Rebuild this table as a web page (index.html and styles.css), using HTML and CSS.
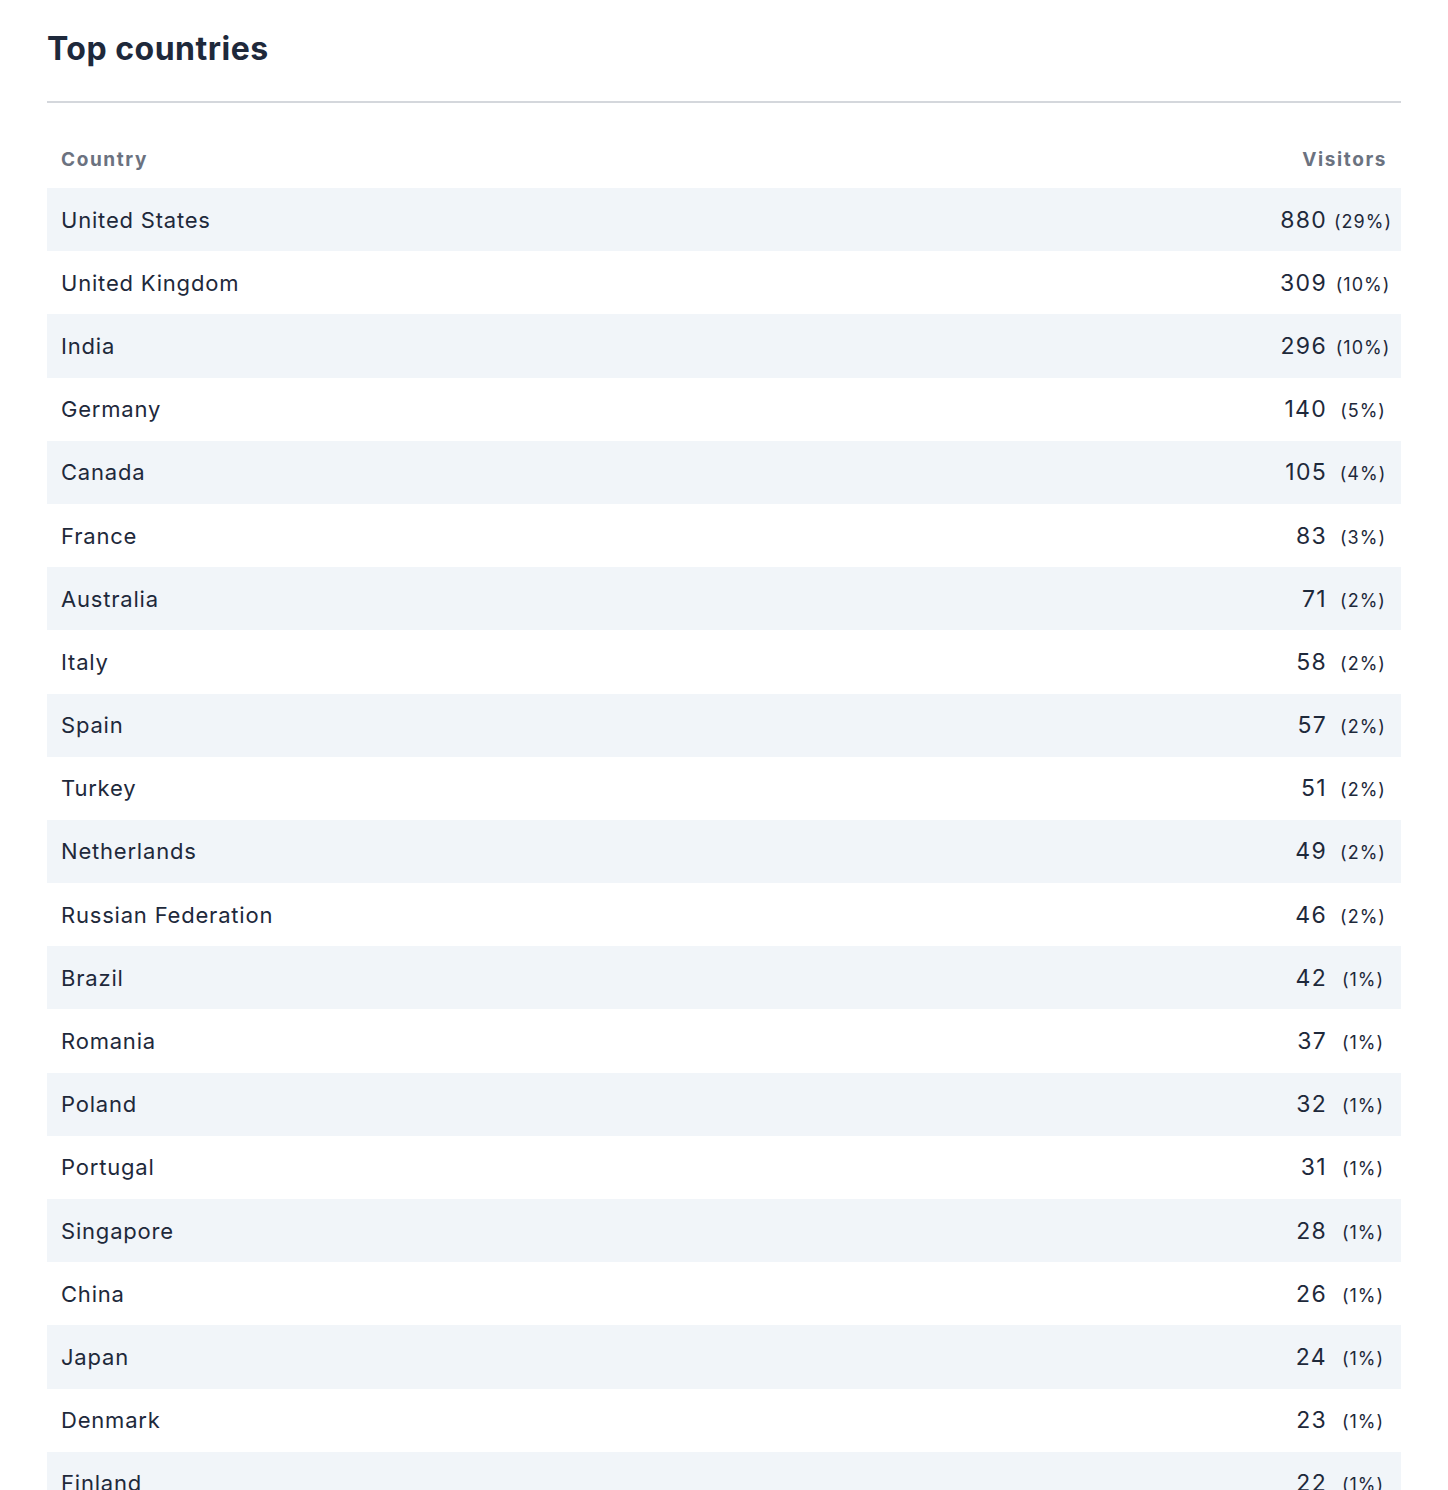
FILE: index.html
```html
<!DOCTYPE html>
<html lang="en">
<head>
  <meta charset="UTF-8">
  <meta name="viewport" content="width=device-width, initial-scale=1.0">
  <title>Top countries</title>
  <link rel="stylesheet" href="styles.css">
</head>
<body>
  <div class="panel">
    <h1 class="panel-title">Top countries</h1>

    <table class="countries">
      <thead>
        <tr>
          <th class="col-country">Country</th>
          <th class="col-visitors">Visitors</th>
        </tr>
      </thead>
      <tbody>
        <tr><td>United States</td><td class="num">880<span class="pct">(29%)</span></td></tr>
        <tr><td>United Kingdom</td><td class="num">309<span class="pct">(10%)</span></td></tr>
        <tr><td>India</td><td class="num">296<span class="pct">(10%)</span></td></tr>
        <tr><td>Germany</td><td class="num">140<span class="pct">(5%)</span></td></tr>
        <tr><td>Canada</td><td class="num">105<span class="pct">(4%)</span></td></tr>
        <tr><td>France</td><td class="num">83<span class="pct">(3%)</span></td></tr>
        <tr><td>Australia</td><td class="num">71<span class="pct">(2%)</span></td></tr>
        <tr><td>Italy</td><td class="num">58<span class="pct">(2%)</span></td></tr>
        <tr><td>Spain</td><td class="num">57<span class="pct">(2%)</span></td></tr>
        <tr><td>Turkey</td><td class="num">51<span class="pct">(2%)</span></td></tr>
        <tr><td>Netherlands</td><td class="num">49<span class="pct">(2%)</span></td></tr>
        <tr><td>Russian Federation</td><td class="num">46<span class="pct">(2%)</span></td></tr>
        <tr><td>Brazil</td><td class="num">42<span class="pct">(1%)</span></td></tr>
        <tr><td>Romania</td><td class="num">37<span class="pct">(1%)</span></td></tr>
        <tr><td>Poland</td><td class="num">32<span class="pct">(1%)</span></td></tr>
        <tr><td>Portugal</td><td class="num">31<span class="pct">(1%)</span></td></tr>
        <tr><td>Singapore</td><td class="num">28<span class="pct">(1%)</span></td></tr>
        <tr><td>China</td><td class="num">26<span class="pct">(1%)</span></td></tr>
        <tr><td>Japan</td><td class="num">24<span class="pct">(1%)</span></td></tr>
        <tr><td>Denmark</td><td class="num">23<span class="pct">(1%)</span></td></tr>
        <tr><td>Finland</td><td class="num">22<span class="pct">(1%)</span></td></tr>
      </tbody>
    </table>
  </div>
</body>
</html>
```

FILE: styles.css
```css
body {
  margin: 0;
  padding: 0;
  background: #fff;
  color: #1e293b;
  font-family: Inter, "Noto Sans", sans-serif;
}
.panel {
  padding: 26px 47px 0 47px;
}
.panel-title {
  margin: 0;
  padding-bottom: 29px;
  font-size: 32px;
  font-weight: 700;
  line-height: 46px;
  letter-spacing: 0.5px;
  color: #1e293b;
  border-bottom: 2px solid #d4d7dc;
}
.countries {
  width: 100%;
  margin-top: 27px;
  border-collapse: collapse;
}
.countries th {
  height: 58px;
  padding: 0 14px;
  font-size: 19px;
  font-weight: 700;
  letter-spacing: 1.6px;
  color: #6b7280;
  vertical-align: middle;
}
.col-country {
  text-align: left;
}
.col-visitors {
  text-align: right;
}
.countries td {
  height: 63.2px;
  padding: 0 14px;
  font-size: 22px;
  letter-spacing: 0.8px;
  color: #1e293b;
  vertical-align: middle;
}
.countries tbody tr:nth-child(odd) {
  background: #f1f5f9;
}
.countries td.num {
  text-align: right;
  padding-right: 6px;
  font-size: 23px;
  letter-spacing: 1.3px;
  white-space: nowrap;
}
.pct {
  display: inline-block;
  width: 64px;
  margin-left: 4px;
  font-size: 18px;
  letter-spacing: 1px;
  text-align: center;
}
```
